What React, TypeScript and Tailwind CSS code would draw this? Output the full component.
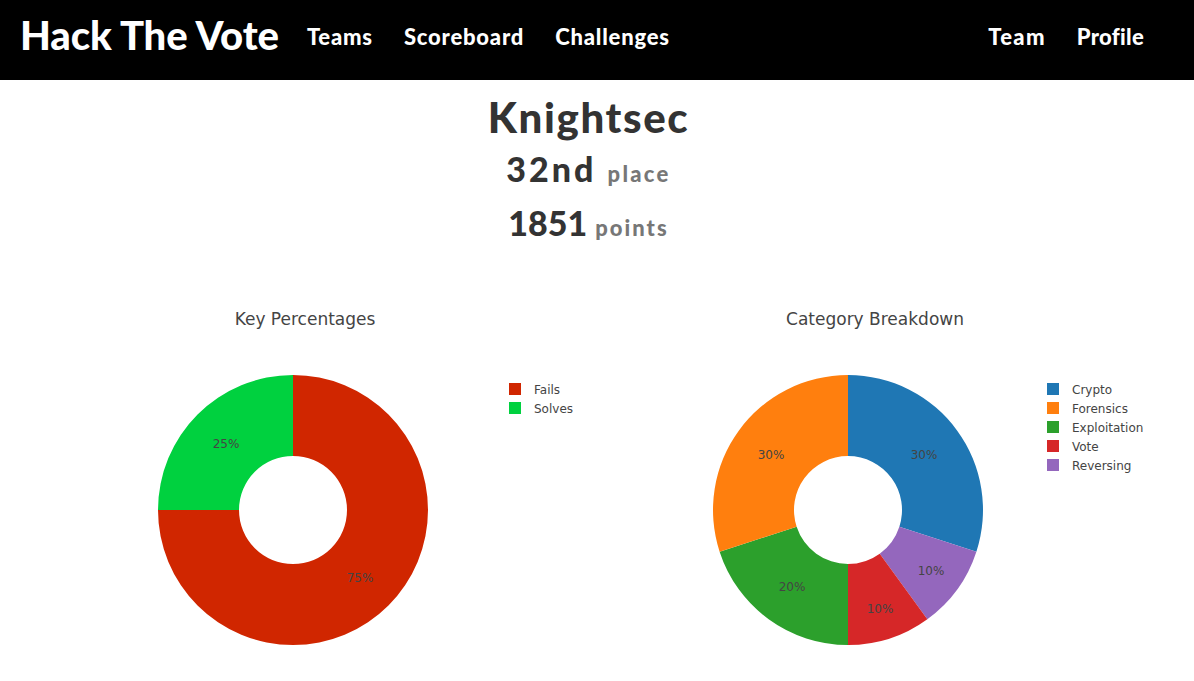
import React from 'react'

const heading = { fontFamily: 'Lato, "DejaVu Sans", sans-serif' }
const plotFont = { fontFamily: '"DejaVu Sans", verdana, arial, sans-serif' }

type Slice = { label: string; value: number; color: string; tx: number; ty: number }

function arcPath(cx: number, cy: number, r0: number, r1: number, a0: number, a1: number) {
  const rad = (a: number) => ((a - 90) * Math.PI) / 180
  const p = (r: number, a: number) => [cx + r * Math.cos(rad(a)), cy + r * Math.sin(rad(a))]
  const large = a1 - a0 > 180 ? 1 : 0
  const [x0, y0] = p(r1, a0)
  const [x1, y1] = p(r1, a1)
  const [x2, y2] = p(r0, a1)
  const [x3, y3] = p(r0, a0)
  return `M${x0} ${y0} A${r1} ${r1} 0 ${large} 1 ${x1} ${y1} L${x2} ${y2} A${r0} ${r0} 0 ${large} 0 ${x3} ${y3} Z`
}

function Donut({
  title,
  titleX,
  cx,
  legendX,
  slices,
  legend,
}: {
  title: string
  titleX: number
  cx: number
  legendX: number
  slices: Slice[]
  legend: { label: string; color: string }[]
}) {
  const total = slices.reduce((s, x) => s + x.value, 0)
  let start = 0
  return (
    <svg width="597" height="380" style={plotFont}>
      <text x={titleX} y={35} textAnchor="middle" fontSize="17" fill="#444">
        {title}
      </text>
      {slices.map((s) => {
        const a0 = start
        const a1 = start + (s.value / total) * 360
        start = a1
        return <path key={s.label} d={arcPath(cx, 220, 54, 135, a0, a1)} fill={s.color} />
      })}
      {slices.map((s) => (
        <text key={s.label + 't'} x={s.tx} y={s.ty + 5} textAnchor="middle" fontSize="12" fill="#444">
          {Math.round((s.value / total) * 100)}%
        </text>
      ))}
      {legend.map((l, i) => (
        <g key={l.label}>
          <rect x={legendX} y={93 + i * 19} width="12" height="12" fill={l.color} />
          <text x={legendX + 25} y={104 + i * 19} fontSize="12" fill="#444">
            {l.label}
          </text>
        </g>
      ))}
    </svg>
  )
}

export default function App() {
  return (
    <div className="min-h-[681px] bg-white">
      <header className="flex h-[80px] items-center bg-black pb-[10px] pl-5 text-white" style={heading}>
        <span className="text-[40px] font-black tracking-[-0.1px]">Hack The Vote</span>
        <nav className="ml-[28px] flex gap-[31px] pt-[3px] text-[22px] font-black tracking-[0.8px]">
          <a>Teams</a>
          <a>Scoreboard</a>
          <a>Challenges</a>
        </nav>
        <nav className="ml-auto mr-[50px] flex gap-[31px] pt-[3px] text-[22px] font-black tracking-[0.8px]">
          <a className="tracking-[1.3px]">Team</a>
          <a className="tracking-[0.3px]">Profile</a>
        </nav>
      </header>

      <div className="pr-[17px] pt-[12px] text-center text-[#333]" style={heading}>
        <h1 className="text-[42px] font-black leading-[50px] tracking-[1.6px]">Knightsec</h1>
        <h2 className="mt-[5px] text-[34px] font-black leading-[44px] tracking-[3px]">
          32nd <span className="text-[22px] tracking-[2.3px] text-[#777]">place</span>
        </h2>
        <h2 className="mt-[5px] text-[34px] font-black leading-[44px]">
          1851 <span className="text-[22px] tracking-[2px] text-[#777]">points</span>
        </h2>
      </div>

      <div className="mt-[40px] grid grid-cols-2">
        <Donut
          title="Key Percentages"
          titleX={305}
          cx={293}
          legendX={509}
          slices={[
            { label: 'Fails', value: 75, color: '#d02600', tx: 360, ty: 287 },
            { label: 'Solves', value: 25, color: '#00d13f', tx: 226, ty: 153 },
          ]}
          legend={[
            { label: 'Fails', color: '#d02600' },
            { label: 'Solves', color: '#00d13f' },
          ]}
        />
        <Donut
          title="Category Breakdown"
          titleX={278}
          cx={251}
          legendX={450}
          slices={[
            { label: 'Crypto', value: 30, color: '#1f77b4', tx: 327, ty: 164 },
            { label: 'Reversing', value: 10, color: '#9467bd', tx: 334, ty: 280 },
            { label: 'Vote', value: 10, color: '#d62728', tx: 283, ty: 318 },
            { label: 'Exploitation', value: 20, color: '#2ca02c', tx: 195, ty: 296 },
            { label: 'Forensics', value: 30, color: '#ff7f0e', tx: 174, ty: 164 },
          ]}
          legend={[
            { label: 'Crypto', color: '#1f77b4' },
            { label: 'Forensics', color: '#ff7f0e' },
            { label: 'Exploitation', color: '#2ca02c' },
            { label: 'Vote', color: '#d62728' },
            { label: 'Reversing', color: '#9467bd' },
          ]}
        />
      </div>
    </div>
  )
}
